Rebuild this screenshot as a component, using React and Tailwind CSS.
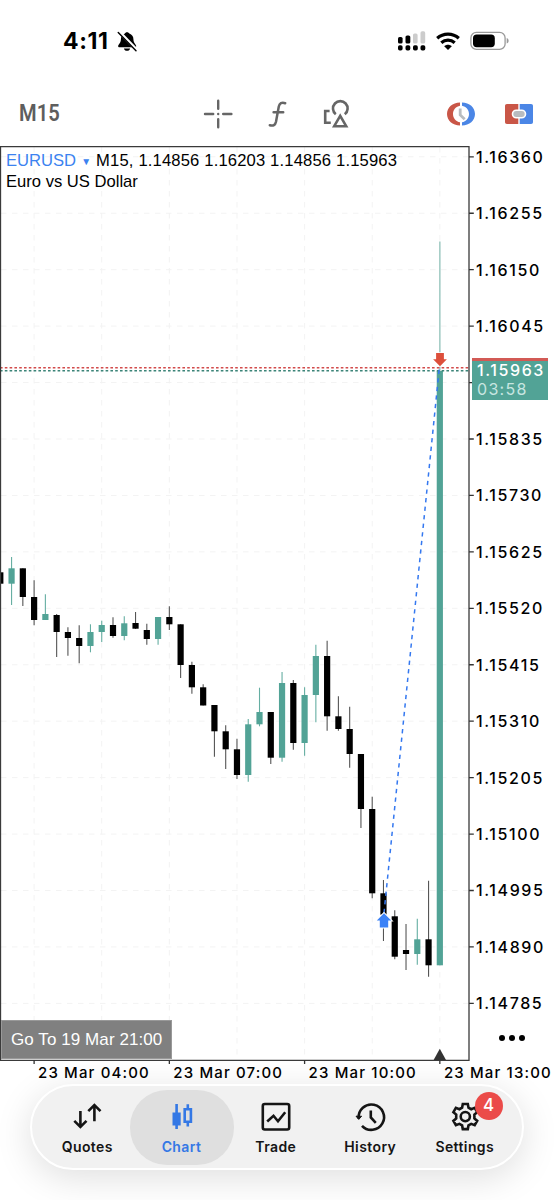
// each candle: [body top, body bottom, wick top, wick bottom, bullish]
const candles = [
  [572.3, 583.7, 572.3, 583.7, 0],
  [568.3, 583.7, 557, 605, 1],
  [568.3, 597, 568.3, 606, 0],
  [597, 620, 580.3, 625.3, 0],
  [614, 620, 594.3, 620, 1],
  [615, 632, 614, 657, 0],
  [632, 638, 627.3, 655.7, 0],
  [638, 646, 625.3, 663.3, 0],
  [632, 646, 624.3, 652.3, 1],
  [625, 632, 620.7, 642, 1],
  [625, 636, 617.3, 637.7, 0],
  [623.3, 636, 616.3, 640.3, 1],
  [623, 628.7, 612, 629, 0],
  [630, 639, 623.7, 644.7, 0],
  [617, 639, 617, 644.7, 1],
  [617, 624.3, 606.3, 630, 0],
  [624.3, 665, 624.3, 678, 0],
  [665, 687.3, 661.7, 693.7, 0],
  [687.3, 705.5, 684.3, 705.5, 0],
  [705, 731.3, 705, 756.7, 0],
  [731.3, 749.3, 725.3, 769, 0],
  [749.3, 775, 738.7, 779, 0],
  [724.3, 775, 719, 781.7, 1],
  [712, 724.3, 687.7, 726.3, 1],
  [712, 757.7, 712, 764, 0],
  [683, 757.7, 672, 761.7, 1],
  [683, 743, 680, 749.7, 0],
  [695, 743, 687.3, 755.7, 1],
  [656, 695, 644.7, 722.3, 1],
  [656, 716.3, 640.7, 730.7, 0],
  [716.3, 729, 696.3, 730.7, 0],
  [729, 754, 706.7, 767.7, 0],
  [754, 809, 754, 828, 0],
  [809, 893.3, 796.7, 898.3, 0],
  [893.3, 914.7, 880, 941, 0],
  [916.3, 956.7, 910.3, 959.3, 0],
  [950, 954, 924, 970, 0],
  [939.3, 954, 918.7, 964.7, 1],
  [939.3, 965.3, 880.7, 976.7, 0],
  [371, 965.3, 241.5, 965.3, 1],
];

// the empty slot sits under the current price tag
const prices = [
  '1.16360', '1.16255', '1.16150', '1.16045', '', '1.15835', '1.15730', '1.15625',
  '1.15520', '1.15415', '1.15310', '1.15205', '1.15100', '1.14995', '1.14890', '1.14785',
];

const times = ['23 Mar 04:00', '23 Mar 07:00', '23 Mar 10:00', '23 Mar 13:00'];

const candleX = (i) => 0.3 + i * 11.27;
const priceY = (i) => 156.8 + i * 56.44;

function StatusBar() {
  return (
    <div className="flex h-[82px] items-center justify-between pl-[63px] pr-[45px]">
      <div className="flex items-center">
        <span className="w-[54px] text-[23px] leading-none font-bold tracking-[0.6px]">4:11</span>
        <svg className="h-[21px] w-[21px]" viewBox="0 0 22 22">
          <path d="M10.5 1.2c1.2 0 2 .6 2.4 1.5 2.8.9 4.3 3.3 4.3 6 0 4.200 2.900 5.300 2.900 7.300 0 .8-.6 1.100-1.400 1.100H2.600c-.8 0-1.400-.3-1.400-1.100 0-2 2.900-3.100 2.900-7.300 0-2.700 1.500-5.100 4.200-6 .300-.9 1-1.500 2.200-1.500z" />
          <path d="M7.300 18.400h6.400c-.3 1.500-1.500 2.400-3.200 2.400s-2.900-.9-3.200-2.400z" />
          <path d="M2.200.8l18.600 19.200" stroke="#fff" strokeWidth="3.400" />
          <path d="M1.300 1.600l18.600 19" stroke="#000" strokeWidth="1.500" strokeLinecap="round" />
        </svg>
      </div>
      <div className="flex items-center">
        <svg className="h-[20px] w-[29px]" viewBox="0 0 29 20">
          <rect x="1" y="6" width="4.600" height="6.500" rx="1.600" />
          <rect x="8.500" y="4.500" width="4.800" height="8" rx="1.600" />
          <rect x="16" y="2.500" width="4.600" height="10" rx="1.600" fill="#ccc" />
          <rect x="23.500" y="0.300" width="4.700" height="12.200" rx="1.600" fill="#ccc" />
          <rect x="1" y="14.300" width="4.600" height="5.200" rx="1.700" />
          <rect x="8.500" y="14.300" width="4.800" height="5.200" rx="1.700" />
          <rect x="16" y="14.300" width="4.800" height="5.200" rx="1.700" />
          <rect x="23.500" y="14.300" width="4.800" height="5.200" rx="1.700" />
        </svg>
        <svg className="ml-[9px] h-[18px] w-[26px]" viewBox="0 0 26 18" fill="none" stroke="#000" strokeWidth="3.200">
          <path d="M2.200 6.300C8.300.7 17.700.7 23.800 6.300" />
          <path d="M6.300 10.700c3.900-3.500 9.500-3.500 13.400 0" />
          <path d="M9.200 14.300c2.200-2 5.400-2 7.600 0L13 17.900z" fill="#000" stroke="none" />
        </svg>
        <svg className="ml-[9px] h-[20px] w-[39px]" viewBox="0 0 39 20">
          <rect x="0.900" y="1.400" width="34.200" height="17" rx="5.500" fill="none" stroke="#999" strokeWidth="1.300" />
          <rect x="3" y="3.500" width="21.800" height="12.800" rx="3.700" />
          <path d="M36.700 7v5.600c1.300-.5 1.900-1.500 1.900-2.800s-.6-2.300-1.900-2.800z" fill="#999" />
        </svg>
      </div>
    </div>
  );
}

function Toolbar() {
  return (
    <div className="flex h-[64px] items-center pl-[19px] pr-[20px]">
      <span className="w-[184px] origin-left scale-x-[0.84]">
        <span className="font-[Roboto] text-[24px] leading-none font-semibold text-[#5e5e5e]">M15</span>
      </span>
      <svg className="h-[30px] w-[30px]" viewBox="0 0 30 30" stroke="#666" strokeWidth="2.400" strokeLinecap="round">
        <path d="M2 15h8.200M20.200 15h8.200M15.200 1.800v8M15.200 20.200v8M15.200 15h.01" />
      </svg>
      <svg className="ml-[34px] h-[30px] w-[22px]" viewBox="0 0 22 30" fill="none" stroke="#666" strokeWidth="2.500" strokeLinecap="round">
        <path d="M18.200 4.200c-3.500-1.200-5.700.1-6.400 3.400L9 22.800c-.7 3.300-2.700 4.500-6.200 3.400M6.600 13.200h9.600" />
      </svg>
      <svg className="ml-[32px] h-[30px] w-[30px]" viewBox="0 0 30 30" fill="none" stroke="#666" strokeWidth="2.600">
        <path d="M8.600 12H4.200v11.800h5.600" />
        <path d="M14.800 15.200a7.300 7.300 0 1 1 9 0" />
        <path d="M19.200 16.800l-6 10.400h12z" />
      </svg>
      <svg className="ml-auto h-[26px] w-[30px]" viewBox="0 0 30 26">
        <path d="M14 1.500C6.500 1.500 1 6.500 1 13s5.500 11.500 13 11.500v-3.200c-4-.8-7-4-7-8.300s3-7.500 7-8.300z" fill="#c95647" />
        <path d="M16 1.500c7.500 0 13 5 13 11.500s-5.500 11.500-13 11.500v-3.200c4-.8 7-4 7-8.300s-3-7.500-7-8.300z" fill="#4b86e6" />
        <path d="M14.200 7.500v6.500l4.500 4.200" fill="none" stroke="#b8bcc0" strokeWidth="2.800" />
      </svg>
      <svg className="ml-[28px] h-[24px] w-[30px]" viewBox="0 0 30 24">
        <path d="M3 2h11.300v20H3c-1.300 0-2-.7-2-2V4c0-1.300.7-2 2-2z" fill="#c95647" />
        <path d="M15.700 2H27c1.300 0 2 .7 2 2v16c0 1.300-.7 2-2 2H15.700z" fill="#4b86e6" />
        <rect x="8.500" y="8.300" width="13" height="7.400" rx="3.700" fill="#b8bcc0" stroke="#fff" strokeWidth="1.600" />
      </svg>
    </div>
  );
}

function Candle({ data, index }) {
  const [top, bottom, high, low, up] = data;
  const x = candleX(index);
  const last = index === candles.length - 1;
  return (
    <g>
      <path d={`M${x} ${high}V${low}`} stroke={up ? (last ? '#a5cdc6' : '#65aea2') : '#555'} strokeWidth={last ? 1.6 : 1.1} />
      <rect x={x - 3.1} y={top} width="6.200" height={bottom - top} fill={up ? '#52a396' : '#000'} />
    </g>
  );
}

function Chart() {
  return (
    <div className="relative flex h-[915px]">
      <svg className="h-[930px] w-[475px] shrink-0" viewBox="0 146 475 930">
        <g stroke="#f3f3f3" strokeWidth="1" strokeDasharray="5.500 5.500">
          {prices.map((_, i) => <path key={i} d={`M1 ${priceY(i)}H469`} />)}
          {[3, 9, 15, 21, 27, 33, 39].map((i) => <path key={i} d={`M${candleX(i)} 147V1060`} />)}
        </g>
        {candles.map((c, i) => <Candle key={i} data={c} index={i} />)}

        {/* ask and bid lines */}
        <path d="M0 367.700H469" stroke="#d24b4b" strokeWidth="1.500" strokeDasharray="2.600 2.200" />
        <path d="M0 370.700H469" stroke="#3b8478" strokeWidth="1.500" strokeDasharray="2.600 2.200" />

        {/* closed position */}
        <path d="M384 913L439.500 366" stroke="#3478f0" strokeWidth="1.500" strokeDasharray="4.300 4.300" />
        <path d="M384 913.200l7.200 7.200h-3v7h-8.400v-7h-3z" fill="#3b82f7" stroke="#fff" strokeWidth="2" paintOrder="stroke" />
        <path d="M440 366.200l-6.900-7h3v-6.200h7.800v6.200h3z" fill="#dd4f3b" stroke="#fff" strokeWidth="1.500" paintOrder="stroke" />

        {/* frame and ticks */}
        <path d="M0.500 146.500H469V1060.300H0.500z" fill="none" stroke="#3a3a3a" strokeWidth="1.300" />
        <path
          d={prices.map((_, i) => `M469 ${priceY(i)}h4.800`).join('') + [3, 15, 27, 39].map((i) => `M${candleX(i)} 1060v4`).join('')}
          stroke="#333"
          strokeWidth="1.300"
        />
        <path d="M439.800 1048.800l6.200 11.200h-12.400z" fill="#333" />
      </svg>

      <div className="-mt-[17.500px] ml-[1px] flex flex-col">
        {prices.map((p, i) => (
          <span key={i} className="flex h-[56.440px] shrink-0 items-center text-[16px] leading-none font-medium tracking-[1.600px]">{p}</span>
        ))}
      </div>

      <div className="absolute left-[6px] top-[4px] text-[16.600px] leading-[21px] font-[Liberation_Sans]">
        <p className="whitespace-nowrap">
          <span className="text-[#3b82f0]">EURUSD</span>
          <span className="mx-[5px] inline-block w-[10px] text-center align-[1px] text-[10px] leading-none text-[#3b82f0]">▼</span>
          <span className="tracking-[0.160px]">M15, 1.14856 1.16203 1.14856 1.15963</span>
        </p>
        <p>Euro vs US Dollar</p>
      </div>

      <div className="absolute left-[472px] top-[212px] h-[42px] w-[76px] border-t-[3px] border-[#d25a55] bg-[#52a396] pl-[5px] text-[16px] tracking-[1.600px] text-white">
        <p className="leading-[19px] font-medium">1.15963</p>
        <p className="leading-[18px] tracking-[1.300px] text-[#c8e6e1]">03:58</p>
      </div>

      <button className="absolute left-[1px] top-[874px] h-[39px] w-[171px] border border-[#999] bg-[#808080] pl-[9px] text-left font-[Liberation_Sans] text-[17px] whitespace-nowrap tracking-[0.080px] text-white">
        Go To 19 Mar 21:00
      </button>

      <div className="absolute left-[499px] top-[889px] flex gap-[4px]">
        <i className="h-[6px] w-[6px] rounded-full bg-black" />
        <i className="h-[6px] w-[6px] rounded-full bg-black" />
        <i className="h-[6px] w-[6px] rounded-full bg-black" />
      </div>
    </div>
  );
}

function TimeAxis() {
  return (
    <div className="flex h-[23px] items-center pl-[38px]">
      {times.map((t) => (
        <span key={t} className="w-[135.300px] shrink-0 text-[15px] leading-none font-medium tracking-[1.150px] whitespace-nowrap">{t}</span>
      ))}
    </div>
  );
}

const tabs = [
  {
    name: 'Quotes',
    icon: <path d="M8.400 8v15.500M2.300 17.800l6.100 6.100 6.100-6.100M22.400 18.200V2.500M16.300 8.200l6.100-6.100 6.100 6.100" />,
  },
  {
    name: 'Chart',
    icon: (
      <>
        <path d="M9.600 1v25M20.800 1.200v4M20.800 19.500v4" />
        <path d="M5.500 9.500h8.200v13H5.500z" fill="currentColor" stroke="none" />
        <path d="M17.700 6.200h6.200v12.500h-6.200z" />
      </>
    ),
  },
  {
    name: 'Trade',
    icon: (
      <>
        <rect x="1.800" y="1" width="26.400" height="25.500" rx="2" />
        <path d="M6.200 18.500l6.300-5.700 4.500 5.500 7.200-9" />
      </>
    ),
  },
  {
    name: 'History',
    icon: (
      <>
        <path d="M3.700 15.500A12.700 12.700 0 1 1 7 22.800" />
        <path d="M1 13.200h5.600l-2.800 3.200z" fill="currentColor" strokeWidth="1" />
        <path d="M15.800 7.500v7l5 5.300" />
      </>
    ),
  },
  {
    name: 'Settings',
    icon: (
      <>
        <path d="M12.800 1h5l.7 3.700 2.700 1.500 3.500-1.300 2.500 4.300-2.800 2.400v3.900l2.800 2.400-2.500 4.300-3.500-1.300-2.700 1.500-.7 3.700h-5l-.7-3.700-2.700-1.500-3.500 1.300-2.500-4.300 2.800-2.400v-3.900L3.400 9.200l2.500-4.300 3.500 1.300 2.700-1.500z" />
        <circle cx="15.300" cy="13.600" r="4.600" />
      </>
    ),
  },
];

function TabBar() {
  return (
    <nav className="mx-[30px] flex h-[86px] w-[494px] items-center rounded-[43px] border-2 border-white bg-[#f1f1f1] px-[3px] shadow-[0_8px_36px_rgba(0,0,0,0.13)]">
      {tabs.map(({ name, icon }) => (
        <button
          key={name}
          className={
            name === 'Chart'
              ? 'relative mx-[-5px] flex h-[75px] w-[104px] shrink-0 flex-col items-center rounded-[37px] bg-[#dfdfdf] pt-[13px] text-[#3478e5]'
              : 'relative flex h-[75px] w-[94.500px] shrink-0 flex-col items-center pt-[13px] text-[#151515] first:ml-[5px]'
          }
        >
          <svg className="h-[28px] w-[30px] overflow-visible" viewBox="0 0 30 28" fill="none" stroke="currentColor" strokeWidth="2.600">
            {icon}
          </svg>
          <span className="mt-[8px] text-[14px] leading-[16px] font-semibold tracking-[0.400px]">{name}</span>
          {name === 'Settings' && (
            <span className="absolute left-[57px] top-[2px] flex h-[28px] w-[28px] items-center justify-center rounded-full bg-[#eb4b49] text-[17px] font-medium text-white">4</span>
          )}
        </button>
      ))}
    </nav>
  );
}

export default function App() {
  return (
    <main className="h-[1200px] w-[554px] overflow-hidden bg-white font-[Inter] text-black">
      <StatusBar />
      <Toolbar />
      <Chart />
      <TimeAxis />
      <TabBar />
    </main>
  );
}
